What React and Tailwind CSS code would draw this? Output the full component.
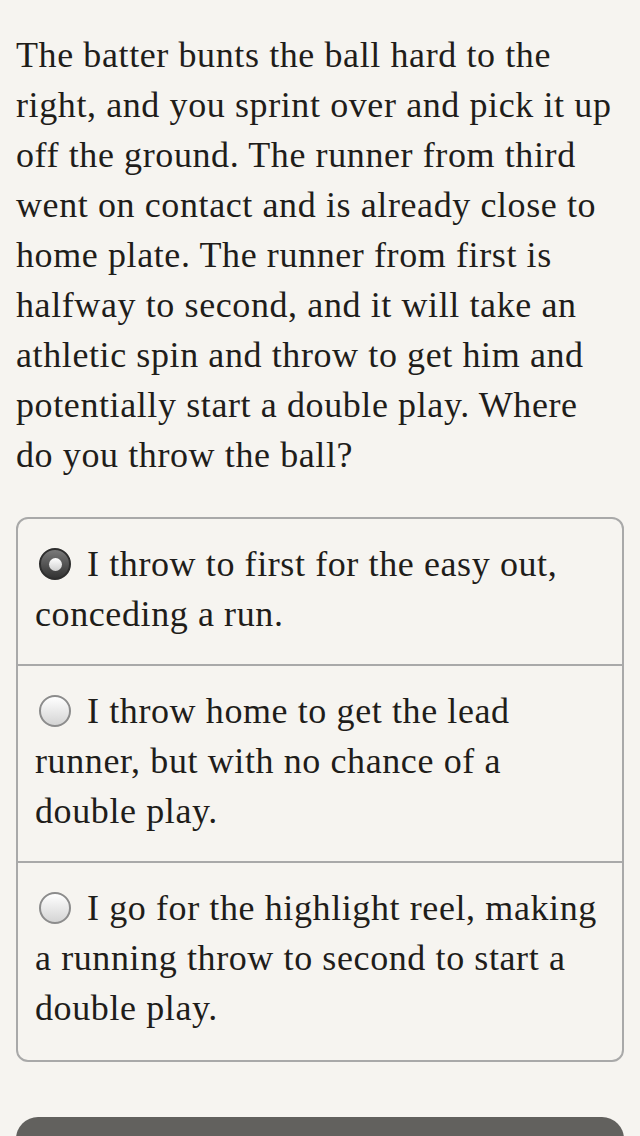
import React, { useState } from 'react';

const options = [
    'I throw to first for the easy out, conceding a run.',
    'I throw home to get the lead runner, but with no chance of a double play.',
    'I go for the highlight reel, making a running throw to second to start a double play.',
];

const Radio = ({ checked }) =>
    checked ? (
        <span className="inline-block w-[32px] h-[32px] rounded-full border-2 border-[#2e2e2e] bg-gradient-to-b from-[#7a7a7a] to-[#333333] align-[-4px] mr-[16px] ml-[4px]">
            <span className="block w-[13px] h-[13px] mx-auto mt-[7.5px] rounded-full bg-gradient-to-b from-white to-[#cfcfcf]" />
        </span>
    ) : (
        <span className="inline-block w-[32px] h-[32px] rounded-full border-2 border-[#8c8c8c] bg-gradient-to-b from-white to-[#d4d4d4] align-[-4px] mr-[16px] ml-[4px]" />
    );

export default function App() {
    const [selected, setSelected] = useState(0);

    return (
        <div
            className="h-[1136px] overflow-hidden bg-[#f6f4f0] text-[#1f1d1a] px-[16px] pt-[30px]"
            style={{ fontFamily: '"Liberation Serif", serif' }}
        >
            <p className="text-[36px] leading-[50px] tracking-[0.6px]">
                The batter bunts the ball hard to the right, and you sprint over and pick it up off the ground. The runner from third went on contact and is already close to home plate. The runner from first is halfway to second, and it will take an athletic spin and throw to get him and potentially start a double play. Where do you throw the ball?
            </p>

            {/* Answers */}
            <div className="mt-[37px] border-2 border-[#a9a9a9] rounded-[12px] overflow-hidden">
                {options.map((text, i) => (
                    <div
                        key={i}
                        onClick={() => setSelected(i)}
                        className={`pl-[17px] pr-[20px] pt-[20px] pb-[25px] last:pb-[27px] text-[36px] leading-[50px] tracking-[0.6px] cursor-pointer ${i > 0 ? 'border-t-2 border-[#a9a9a9]' : ''}`}
                    >
                        <Radio checked={selected === i} />
                        {text}
                    </div>
                ))}
            </div>

            <div className="mt-[55px] h-[60px] rounded-t-[22px] bg-[#62615e]" />
        </div>
    );
}
